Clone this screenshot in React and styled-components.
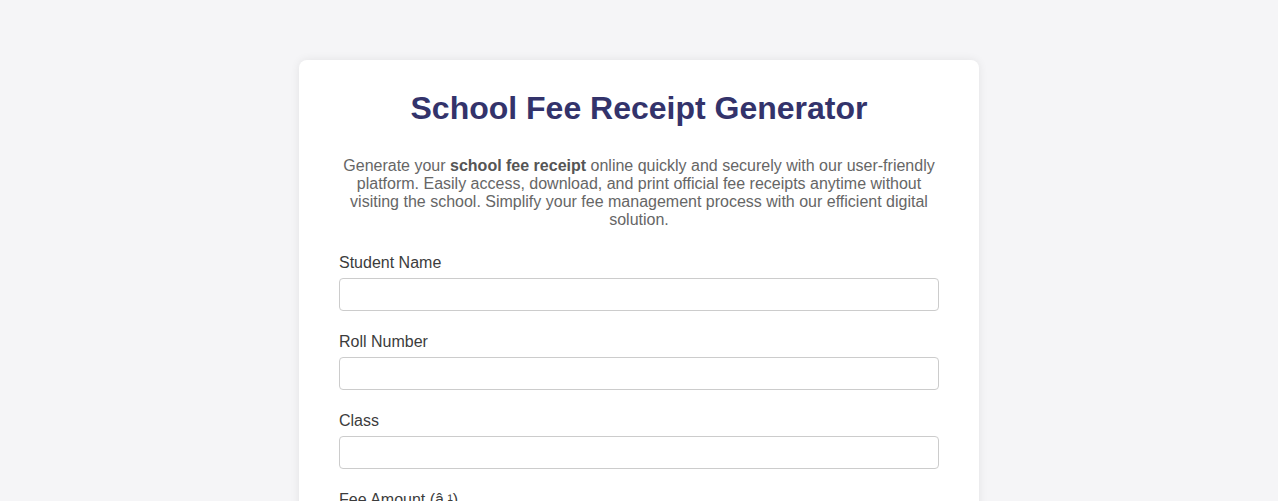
import React from "react";
import styled, { createGlobalStyle } from "styled-components";

const Global = createGlobalStyle`
  html, body { margin: 0; padding: 0; }
  body {
    background: #f5f5f7;
    font-family: "Liberation Sans", Arial, sans-serif;
  }
`;

const Page = styled.div`
  padding: 60px 20px 40px;
  display: flex;
  justify-content: center;
`;

const Card = styled.div`
  width: 600px;
  background: #ffffff;
  border-radius: 8px;
  padding: 30px 40px 40px;
  box-shadow: 0 0 10px rgba(0, 0, 0, 0.08);
`;

const Title = styled.h1`
  margin: 0 0 30px;
  text-align: center;
  font-size: 32px;
  font-weight: bold;
  color: #33336b;
`;

const Intro = styled.p`
  margin: 0 0 25px;
  text-align: center;
  font-size: 16px;
  line-height: 18px;
  color: #666666;
  strong { color: #555555; }
`;

const Field = styled.div`
  margin-bottom: 22px;
`;

const Label = styled.label`
  display: block;
  font-size: 16px;
  line-height: 18px;
  color: #3c3c3c;
  margin-bottom: 6px;
`;

const Input = styled.input`
  display: block;
  box-sizing: border-box;
  width: 100%;
  height: 33px;
  padding: 8px;
  font-size: 16px;
  font-family: inherit;
  border: 1px solid #cccccc;
  border-radius: 4px;
  background: #fff;
`;

const fields = ["Student Name", "Roll Number", "Class", "Fee Amount (â‚¹)"];

export default function App() {
  return (
    <>
      <Global />
      <Page>
        <Card>
          <Title>School Fee Receipt Generator</Title>
          <Intro>
            Generate your <strong>school fee receipt</strong> online quickly and
            securely with our user-friendly platform. Easily access, download,
            and print official fee receipts anytime without visiting the school.
            Simplify your fee management process with our efficient digital
            solution.
          </Intro>
          {fields.map((f) => (
            <Field key={f}>
              <Label>{f}</Label>
              <Input type="text" />
            </Field>
          ))}
        </Card>
      </Page>
    </>
  );
}
